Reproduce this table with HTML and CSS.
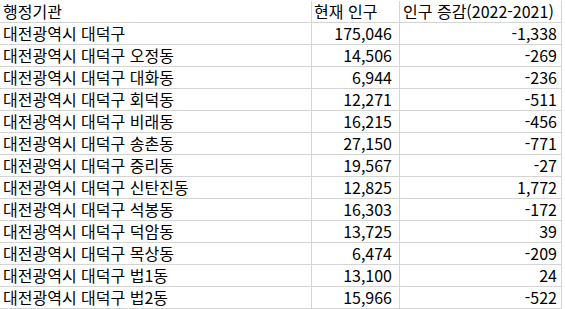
FILE: index.html
```html
<!DOCTYPE html>
<html lang="ko">
<head>
<meta charset="utf-8">
<link rel="stylesheet" href="styles.css">
</head>
<body>
<div class="sheet">
  <div class="row head"><div class="c name">행정기관</div><div class="c pop">현재 인구</div><div class="c diff">인구 증감(2022-2021)</div></div>
  <div class="row"><div class="c name">대전광역시 대덕구</div><div class="c pop">175,046</div><div class="c diff">-1,338</div></div>
  <div class="row"><div class="c name">대전광역시 대덕구 오정동</div><div class="c pop">14,506</div><div class="c diff">-269</div></div>
  <div class="row"><div class="c name">대전광역시 대덕구 대화동</div><div class="c pop">6,944</div><div class="c diff">-236</div></div>
  <div class="row"><div class="c name">대전광역시 대덕구 회덕동</div><div class="c pop">12,271</div><div class="c diff">-511</div></div>
  <div class="row"><div class="c name">대전광역시 대덕구 비래동</div><div class="c pop">16,215</div><div class="c diff">-456</div></div>
  <div class="row"><div class="c name">대전광역시 대덕구 송촌동</div><div class="c pop">27,150</div><div class="c diff">-771</div></div>
  <div class="row"><div class="c name">대전광역시 대덕구 중리동</div><div class="c pop">19,567</div><div class="c diff">-27</div></div>
  <div class="row"><div class="c name">대전광역시 대덕구 신탄진동</div><div class="c pop">12,825</div><div class="c diff">1,772</div></div>
  <div class="row"><div class="c name">대전광역시 대덕구 석봉동</div><div class="c pop">16,303</div><div class="c diff">-172</div></div>
  <div class="row"><div class="c name">대전광역시 대덕구 덕암동</div><div class="c pop">13,725</div><div class="c diff">39</div></div>
  <div class="row"><div class="c name">대전광역시 대덕구 목상동</div><div class="c pop">6,474</div><div class="c diff">-209</div></div>
  <div class="row"><div class="c name">대전광역시 대덕구 법1동</div><div class="c pop">13,100</div><div class="c diff">24</div></div>
  <div class="row"><div class="c name">대전광역시 대덕구 법2동</div><div class="c pop">15,966</div><div class="c diff">-522</div></div>
</div>
</body>
</html>
```
FILE: styles.css
```css
html, body {
  margin: 0;
  padding: 0;
  background: #ffffff;
}
.sheet {
  padding-top: 1px;
  width: 562px;
  font-family: "Noto Sans CJK KR", "Noto Sans", sans-serif;
  font-size: 16px;
  color: #000;
}
.row {
  display: grid;
  grid-template-columns: 312px 88px 162px;
}
.c {
  height: 21px;
  line-height: 21px;
  border-right: 1px solid #d4d4d4;
  border-bottom: 1px solid #d4d4d4;
  white-space: nowrap;
}
.name {
  padding-left: 3px;
}
.pop {
  text-align: right;
  padding-right: 7px;
}
.diff {
  text-align: right;
  padding-right: 4px;
}
.head .pop, .head .diff {
  text-align: left;
  padding-left: 2px;
  padding-right: 0;
}
.head .diff {
  padding-left: 3px;
}
```
